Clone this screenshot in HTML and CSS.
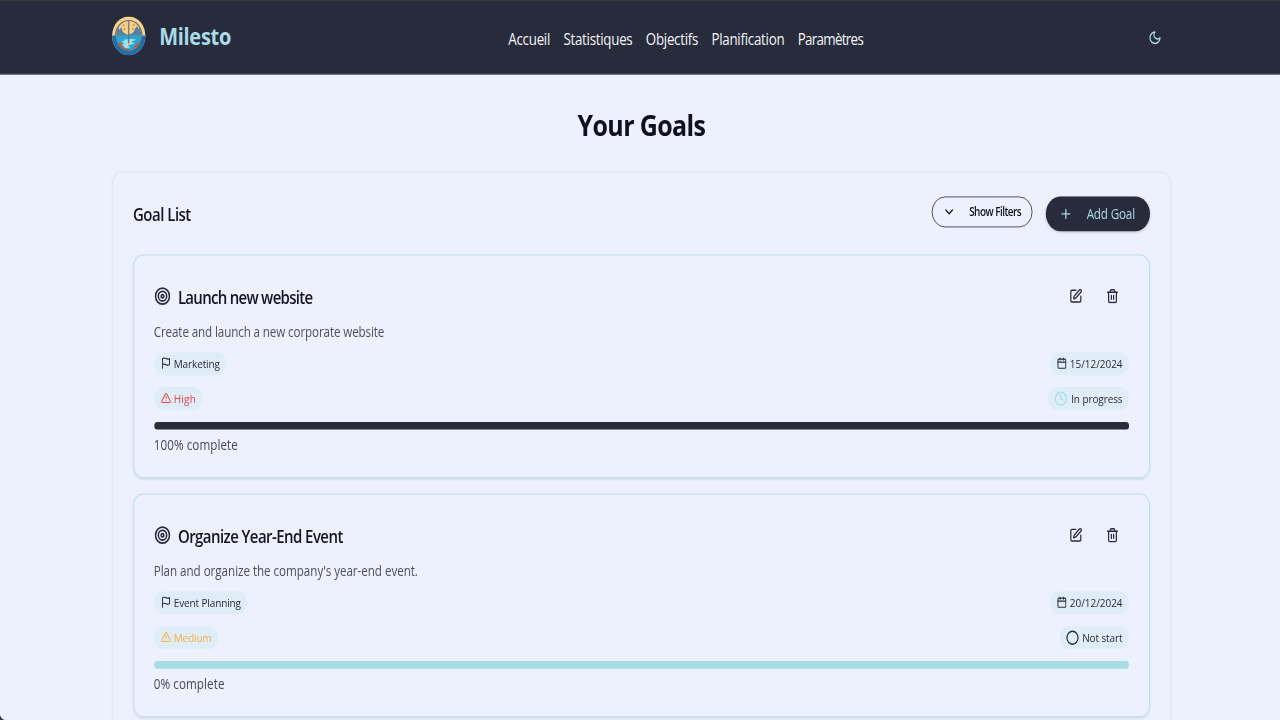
FILE: index.html
```html
<!DOCTYPE html>
<html lang="fr">
<head>
<meta charset="utf-8">
<title>Milesto</title>
<link rel="stylesheet" href="styles.css">
</head>
<body>
<svg width="0" height="0" class="defs">
  <symbol id="target" viewBox="0 0 24 24"><circle cx="12" cy="12" r="10"/><circle cx="12" cy="12" r="6"/><circle cx="12" cy="12" r="2"/></symbol>
  <symbol id="edit" viewBox="0 0 24 24"><path d="M12 3H5a2 2 0 0 0-2 2v14a2 2 0 0 0 2 2h14a2 2 0 0 0 2-2v-7"/><path d="M18.375 2.625a1 1 0 0 1 3 3l-9.013 9.014a2 2 0 0 1-.853.505l-2.873.84a.5.5 0 0 1-.62-.62l.84-2.873a2 2 0 0 1 .506-.852z"/></symbol>
  <symbol id="trash" viewBox="0 0 24 24"><path d="M3 6h18M19 6v14c0 1-1 2-2 2H7c-1 0-2-1-2-2V6M8 6V4c0-1 1-2 2-2h4c1 0 2 1 2 2v2M10 11v6M14 11v6"/></symbol>
  <symbol id="flag" viewBox="0 0 24 24"><path d="M4 15s1-1 4-1 5 2 8 2 4-1 4-1V3s-1 1-4 1-5-2-8-2-4 1-4 1zM4 22v-7"/></symbol>
  <symbol id="alert" viewBox="0 0 24 24"><path d="m21.73 18-8-14a2 2 0 0 0-3.48 0l-8 14A2 2 0 0 0 4 21h16a2 2 0 0 0 1.73-3M12 9v4M12 17h.01"/></symbol>
  <symbol id="calendar" viewBox="0 0 24 24"><path d="M8 2v4M16 2v4M3 10h18"/><rect x="3" y="4" width="18" height="18" rx="2"/></symbol>
  <symbol id="clock" viewBox="0 0 24 24"><circle cx="12" cy="12" r="10"/><path d="M12 6v6l4 2"/></symbol>
  <symbol id="circle" viewBox="0 0 24 24"><circle cx="12" cy="12" r="10"/></symbol>
</svg>
<div class="frame">
<div class="app">
  <header class="topbar">
    <div class="brand">
      <svg class="logo" viewBox="0 0 40 40">
        <defs><clipPath id="dial"><circle cx="20" cy="20" r="15.2"/></clipPath></defs>
        <circle cx="20" cy="20" r="20" fill="#f3d28c"/>
        <path d="M0 20a20 20 0 0 0 40 0z" fill="#1a6fae"/>
        <circle cx="20" cy="20" r="16.4" fill="#6d6273"/>
        <g clip-path="url(#dial)">
          <path d="M4 4h32v17H4z" fill="#f5cf84"/>
          <path d="M4 21v-9l3-2 2 4 2-3 2 5 3 2 3 1 4-1 3-2 2-4 2-2 2 3 2-3 3 4v7z" fill="#55809f"/>
          <path d="M4 20h32v16H4z" fill="#2ba6cf"/>
          <path d="M14 24l8-1 7 1-6 2 4 2-8 2 3 2-7 1-5-3 5-2-4-2 4-1z" fill="#a6dfe3"/>
          <path d="M6 28l4-1 3 3 3 3 4 1v3H8zM26 31l5-4 4-1-4 8-6 1z" fill="#9b6a5b"/>
          <path d="M13 9h2M25 9h2M14 13h2M24 13h2" stroke="#b28b5b" stroke-width="1.5"/>
        </g>
        <path d="M20 5v23" stroke="#5f6778" stroke-width="1.3"/>
        <path d="M1 20h38" stroke="#399fc5" stroke-width="1"/>
      </svg>
      <span class="brand-name">Milesto</span>
    </div>
    <nav class="nav"><a class="link">Accueil</a><a class="link">Statistiques</a><a class="link">Objectifs</a><a class="link">Planification</a><a class="link tight">Paramètres</a></nav>
    <svg class="icon moon" viewBox="0 0 24 24"><path d="M12 3a6 6 0 0 0 9 9 9 9 0 1 1-9-9Z"/></svg>
  </header>
  <main class="page">
    <h1 class="page-title">Your Goals</h1>
    <section class="panel">
      <div class="panel-head">
        <h2 class="panel-title">Goal List</h2>
        <div class="panel-actions">
          <button class="btn btn-outline"><svg class="icon" viewBox="0 0 24 24"><path d="m6 9 6 6 6-6"/></svg><span>Show Filters</span></button>
          <button class="btn btn-solid"><svg class="icon" viewBox="0 0 24 24"><path d="M5 12h14M12 5v14"/></svg><span>Add Goal</span></button>
        </div>
      </div>
      <article class="card">
        <div class="card-head">
          <svg class="icon target"><use href="#target"/></svg>
          <h3 class="card-title">Launch new website</h3>
          <div class="card-tools"><span class="tool"><svg class="icon"><use href="#edit"/></svg></span><span class="tool"><svg class="icon"><use href="#trash"/></svg></span></div>
        </div>
        <p class="desc">Create and launch a new corporate website</p>
        <div class="row"><span class="badge"><svg class="icon small"><use href="#flag"/></svg>Marketing</span><span class="badge date"><svg class="icon small"><use href="#calendar"/></svg>15/12/2024</span></div>
        <div class="row second"><span class="badge high"><svg class="icon small"><use href="#alert"/></svg>High</span><span class="badge status"><svg class="icon teal"><use href="#clock"/></svg>In progress</span></div>
        <div class="bar"><div class="fill" style="width:100%"></div></div>
        <p class="percent">100% complete</p>
      </article>
      <article class="card">
        <div class="card-head">
          <svg class="icon target"><use href="#target"/></svg>
          <h3 class="card-title wide">Organize Year-End Event</h3>
          <div class="card-tools"><span class="tool"><svg class="icon"><use href="#edit"/></svg></span><span class="tool"><svg class="icon"><use href="#trash"/></svg></span></div>
        </div>
        <p class="desc wide">Plan and organize the company's year-end event.</p>
        <div class="row"><span class="badge"><svg class="icon small"><use href="#flag"/></svg>Event Planning</span><span class="badge date"><svg class="icon small"><use href="#calendar"/></svg>20/12/2024</span></div>
        <div class="row second"><span class="badge medium"><svg class="icon small"><use href="#alert"/></svg>Medium</span><span class="badge status"><svg class="icon"><use href="#circle"/></svg>Not start</span></div>
        <div class="bar"><div class="fill" style="width:0%"></div></div>
        <p class="percent">0% complete</p>
      </article>
    </section>
  </main>
</div>
</div>
<div class="corner"></div>
</body>
</html>
```
FILE: styles.css
```css
* { box-sizing: border-box; margin: 0; padding: 0; }
body { position: relative; width: 1280px; height: 720px; background: #edf1fe; font-family: "Open Sans", "Noto Sans", sans-serif; color: #282b3c; }
.defs { position: absolute; }
.frame { width: 1280px; height: 720px; overflow: hidden; contain: strict; }
.app { width: 1536px; height: 744px; overflow: hidden; transform: scale(0.83333, 0.96774); transform-origin: 0 0; }
.icon { width: 16px; height: 16px; flex: none; fill: none; stroke: currentColor; stroke-width: 2.2; stroke-linecap: round; stroke-linejoin: round; }
.topbar { height: 77px; padding: 0 142px 3px 134px; display: grid; grid-template-columns: 476px 1fr auto; align-items: center; background: #282b3c; border-top: 1px solid #38383b; border-bottom: 1px solid #565969; }
.brand { display: flex; align-items: center; gap: 16px; }
.logo { width: 41px; height: 40px; }
.brand-name { color: #a8dce7; font-size: 24px; font-weight: 700; line-height: 32px; padding-top: 2px; letter-spacing: -0.35px; }
.nav { display: flex; gap: 16px; color: #f4f5f8; font-size: 16px; line-height: 24px; padding-top: 7px; letter-spacing: -0.32px; white-space: nowrap; }
.tight { letter-spacing: -0.8px; }
.moon { color: #a8dce7; margin-top: 4px; }
.page { padding: 34.5px 131px 0 134.5px; }
.page-title { text-align: center; font-size: 30px; line-height: 36px; font-weight: 700; letter-spacing: -0.75px; color: #0e1120; }
.panel { margin-top: 30.5px; height: 700px; padding: 23.6px 24px 24px; border: 1px solid #e4e6f2; border-radius: 12px; box-shadow: 0 0 3px rgba(40, 43, 60, .08); }
.panel-head { display: flex; justify-content: space-between; height: 36px; margin-bottom: 24px; }
.panel-title, .card-title { font-size: 18px; line-height: 28px; font-weight: 600; letter-spacing: -0.86px; color: #121524; }
.panel-title { padding-top: 4.5px; letter-spacing: -0.6px; }
.panel-actions { display: flex; gap: 16px; align-items: flex-start; }
.btn { display: flex; align-items: center; gap: 16px; border-radius: 18px; font-family: inherit; white-space: nowrap; }
.btn-outline { width: 121px; height: 32px; padding: 0 12px; border: 1px solid #3c3f4f; background: transparent; color: #10131f; font-size: 12px; font-weight: 600; letter-spacing: -0.65px; }
.btn-solid { width: 125px; height: 36px; padding: 0 16px; gap: 17px; border: 0; background: #282b3c; color: #a8dce7; font-size: 14px; font-weight: 500; letter-spacing: -0.2px; box-shadow: 0 1px 3px rgba(40, 43, 60, .25); }
.card { height: 231px; margin-bottom: 16px; padding: 24px; border: 1px solid #b4dde8; border-radius: 12px; box-shadow: 0 1px 2px rgba(40, 43, 60, .1); }
.card-head { display: flex; align-items: center; height: 36px; }
.target { width: 20px; height: 20px; margin-right: 9px; }
.card-title { padding-top: 2px; }
.card-title.wide { letter-spacing: -0.68px; }
.card-tools { display: flex; gap: 4px; margin-left: auto; }
.tool { width: 40px; height: 36px; display: flex; align-items: center; justify-content: center; }
.desc { margin: 7.5px 0 8.5px; font-size: 14px; line-height: 24px; color: #4c4f5f; letter-spacing: -0.16px; }
.desc.wide { letter-spacing: -0.07px; }
.row { display: flex; justify-content: space-between; height: 24px; }
.second { margin: 12px 0; }
.badge { display: flex; align-items: center; gap: 4px; height: 24px; padding: 0 8px; border-radius: 12px; background: #dfedf8; font-size: 12px; letter-spacing: -0.15px; white-space: nowrap; }
.date { letter-spacing: -0.05px; }
.status { letter-spacing: -0.12px; }
.small { width: 12.5px; height: 12.5px; margin-right: -0.5px; }
.high { color: #ee3e46; letter-spacing: 0.25px; }
.medium { color: #f5b03e; }
.teal { color: #a8dce7; }
.bar { height: 8px; border-radius: 4px; background: #a8dce5; overflow: hidden; }
.fill { height: 8px; background: #282b3c; }
.percent { margin-top: 6px; font-size: 14px; line-height: 20px; color: #454858; letter-spacing: 0.07px; }
.corner { position: absolute; left: 0; bottom: 0; width: 6px; height: 6px; background: radial-gradient(circle at 100% 0, transparent 5.5px, #35373d 6.5px); }
```
